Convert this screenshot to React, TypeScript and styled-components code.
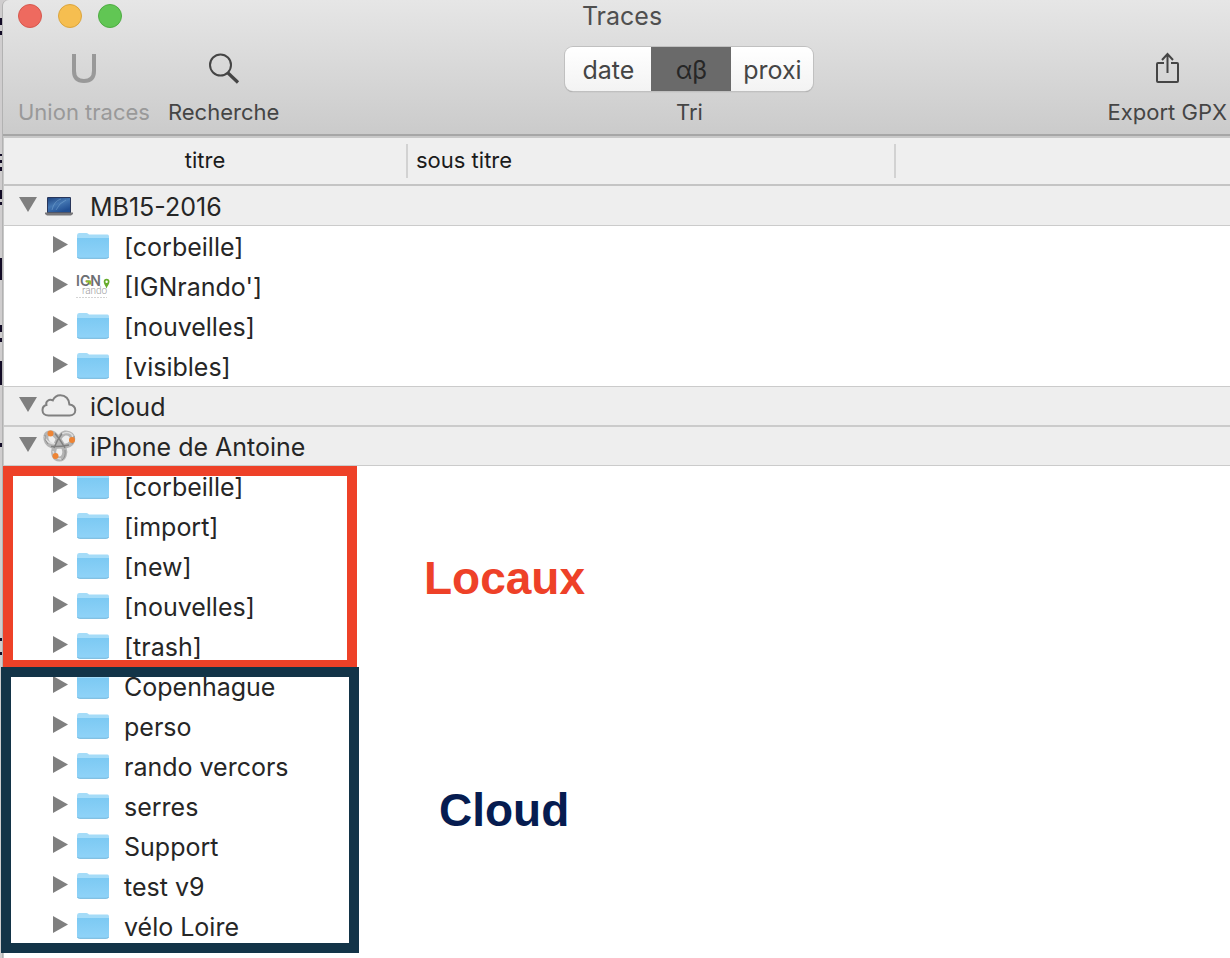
import React, { useState } from "react";
import styled, { createGlobalStyle, css } from "styled-components";

const GlobalStyle = createGlobalStyle`
  *, *::before, *::after { box-sizing: border-box; }
  html, body, #root { height: 100%; }
  body { margin: 0; background: #cfcdce; font-family: Inter, "Liberation Sans", sans-serif; color: #262626; }
  button { font: inherit; color: inherit; border: 0; padding: 0; background: none; }
`;

const Desktop = styled.div`
  display: flex;
  min-height: 100%;
  overflow: hidden;
`;

const Behind = styled.svg`
  flex: none;
  width: 2px;
  height: 958px;
`;

const Window = styled.main`
  flex: 1;
  min-width: 0;
  display: flex;
  flex-direction: column;
  background: #c8c8c8;
  border-left: 1px solid #b2b2b2;
  border-top-left-radius: 6px;
`;

const Toolbar = styled.header`
  display: flex;
  flex-direction: column;
  height: 138px;
  border-top-left-radius: 6px;
  background: linear-gradient(#e6e6e6, #cbcbcb 134px, #a6a6a6 134px, #a6a6a6 136px, #c8c8c8 136px);
`;

const TitleBar = styled.div`
  display: grid;
  grid-template-columns: 1fr auto 1fr;
  align-items: center;
  height: 32px;
  padding: 0 4px 0 15px;
`;

const Lights = styled.div`
  display: flex;
  gap: 16px;
`;

const Light = styled.button<{ $fill: string; $edge: string }>`
  width: 24px;
  height: 24px;
  border-radius: 50%;
  background: ${(p) => p.$fill};
  border: 1px solid ${(p) => p.$edge};
`;

const Title = styled.h1`
  margin: 0;
  font-size: 25px;
  line-height: 32px;
  font-weight: 400;
  color: #4f4f4f;
`;

const Tools = styled.div`
  display: flex;
  justify-content: space-between;
  height: 102px;
  padding: 0 3px 0 15px;
`;

const ToolGroup = styled.div`
  display: flex;
  gap: 18px;
`;

const toolColumn = css`
  display: flex;
  flex-direction: column;
  align-items: center;
  justify-content: flex-start;
  white-space: nowrap;
  font-size: 22px;
  line-height: 28px;
`;

const Tool = styled.button<{ $dim?: boolean }>`
  ${toolColumn}
  color: ${(p) => (p.$dim ? "#999999" : "#454545")};
`;

const ToolIcon = styled.svg`
  width: 40px;
  height: 40px;
  margin: 16px 0 10px;
  fill: none;
  stroke: currentColor;
`;

const SortField = styled.div`
  ${toolColumn}
  margin-right: 8px;
  color: #454545;
`;

const Segments = styled.div`
  display: flex;
  height: 44px;
  margin: 15px 0 7px;
  border-radius: 8px;
  overflow: hidden;
  background: linear-gradient(#ffffff, #f3f3f3);
  box-shadow: 0 0 0 1px #c0c0c0, 0 1px 1px #8c8c8c;
`;

const Segment = styled.button<{ $width: number }>`
  width: ${(p) => p.$width}px;
  font-size: 25px;
  line-height: 46px;
  color: #454545;
  &[aria-pressed="true"] {
    background: #6a6a6a;
    color: #262626;
  }
`;

const Content = styled.div`
  position: relative;
  flex: 1;
  margin-left: 1px;
  background: #ffffff;
`;

const Tree = styled.table`
  width: 100%;
  table-layout: fixed;
  border-collapse: separate;
  border-spacing: 0;
`;

const HeadCell = styled.th`
  height: 48px;
  padding: 6px 0;
  font-size: 22px;
  line-height: 34px;
  font-weight: 400;
  text-align: left;
  color: #1b1b1b;
  background: #efefef;
  border-bottom: 2px solid #c4c4c4;
`;

const HeadLabel = styled.span<{ $center?: boolean }>`
  display: block;
  height: 34px;
  padding-left: ${(p) => (p.$center ? 0 : 8)}px;
  line-height: 32px;
  text-align: ${(p) => (p.$center ? "center" : "left")};
  border-right: 2px solid #d2d2d2;
`;

const GroupCell = styled.td`
  height: 40px;
  padding: 0 0 0 14px;
  background: #eeeeee;
  border-bottom: 1px solid #cbcbcb;
  tbody + tbody & { border-top: 1px solid #cbcbcb; }
`;

const ItemCell = styled.td`
  height: 40px;
  padding: 0 0 0 46px;
`;

const Line = styled.div<{ $gap: number }>`
  display: flex;
  align-items: center;
  height: 38px;
  font-size: 25px;
  line-height: 38px;
  white-space: nowrap;
  svg { flex: none; }
  span { padding: 2px 0 0 ${(p) => p.$gap}px; }
`;

const Toggle = styled.button`
  flex: none;
  display: flex;
  width: 20px;
  height: 38px;
  align-items: center;
  justify-content: center;
  svg { fill: #7f7f7f; }
`;

const IconBox = styled.div<{ $width: number }>`
  flex: none;
  display: flex;
  justify-content: center;
  width: ${(p) => p.$width}px;
`;

const Frame = styled.div<{ $color: string; $top: number; $height: number; $left: number; $width: number }>`
  position: absolute;
  top: ${(p) => p.$top}px;
  left: ${(p) => p.$left}px;
  width: ${(p) => p.$width}px;
  height: ${(p) => p.$height}px;
  border: 10px solid ${(p) => p.$color};
  pointer-events: none;
`;

const Note = styled.strong<{ $color: string; $top: number; $left: number }>`
  position: absolute;
  top: ${(p) => p.$top}px;
  left: ${(p) => p.$left}px;
  font-family: "Liberation Sans", Arial, sans-serif;
  font-size: 46px;
  line-height: 52px;
  color: ${(p) => p.$color};
`;

function FolderIcon() {
  return (
    <svg width="34" height="28" viewBox="0 0 34 28" aria-hidden="true">
      <defs>
        <linearGradient id="folder" x1="0" y1="0" x2="0" y2="1">
          <stop offset="0" stopColor="#7cc9f3" />
          <stop offset="1" stopColor="#90d3f8" />
        </linearGradient>
      </defs>
      <path d="M1 3.500Q1 1 3 1H10.500Q12 1 13 2.500H31.500Q33 2.500 33 4.500V10H1Z" fill="#a5dcf8" />
      <path d="M1 6H33V24.500Q33 26.500 31 26.500H3Q1 26.500 1 24.500Z" fill="url(#folder)" />
      <path d="M1.500 25Q2 26.300 3.500 26.300H30.500Q32 26.300 32.500 25" fill="none" stroke="#74b7dd" />
    </svg>
  );
}

function IgnIcon() {
  return (
    <svg width="36" height="28" viewBox="0 0 36 28" aria-hidden="true">
      <text x="1" y="14" fontFamily="Inter, sans-serif" fontSize="14" fontWeight="600" fill="#6c6e72">IGN</text>
      <path d="M11 9.500H15V12.500" fill="none" stroke="#8fc02c" strokeWidth="2" />
      <text x="7" y="22" fontFamily="Roboto, sans-serif" fontSize="10" fontWeight="300" fill="#9a9a9a">rando</text>
      <path d="M31.500 16.500C30.500 13.500 28.700 12 28.700 9.700A2.900 2.900 0 0 1 34.500 9.700C34.500 12 32.500 13.500 31.500 16.500Z" fill="#66ac2c" />
      <circle cx="31.600" cy="9.700" r="1.200" fill="#ffffff" />
      <path d="M1 25.500H32" stroke="#d4d4d4" strokeWidth="1" strokeDasharray="2 1" />
    </svg>
  );
}

function LaptopIcon() {
  return (
    <svg width="30" height="22" viewBox="0 0 30 22" aria-hidden="true">
      <defs>
        <linearGradient id="screen" x1="0" y1="0" x2="0.600" y2="1">
          <stop offset="0" stopColor="#1f4480" />
          <stop offset="0.500" stopColor="#4477b3" />
          <stop offset="1" stopColor="#214f93" />
        </linearGradient>
      </defs>
      <rect x="3" y="2" width="24" height="17" rx="1" fill="#28365a" />
      <rect x="4" y="3" width="22" height="14" fill="url(#screen)" />
      <path d="M8 15Q10 6 17 4M12 15Q15 8 22 5" fill="none" stroke="#8db9dd" strokeWidth="0.800" opacity="0.500" />
      <path d="M1 17.500H29V19L27 20.500H3L1 19Z" fill="#777679" />
    </svg>
  );
}

function CloudIcon() {
  return (
    <svg width="36" height="24" viewBox="0 0 36 24" fill="none" stroke="#808080" strokeWidth="2" aria-hidden="true">
      <path d="M7.500 21.500C3.800 21.500 1.500 19.200 1.500 16.200C1.500 13.300 3.200 11.500 5.400 11C4.400 7.300 8 4.800 11.800 6.400C13.300 3 16 1.200 19.300 1.200C24.500 1.200 28.200 5 28.400 10.400C32 11 34.300 13.200 34.300 16.200C34.300 19.300 31.800 21.500 28.500 21.500Z" />
    </svg>
  );
}

function RingsIcon() {
  return (
    <svg width="34" height="34" viewBox="0 0 34 34" fill="none" aria-hidden="true">
      <g stroke="#b4b4b4" strokeWidth="5">
        <path d="M16 17C9 19 4 14 3.800 8.500C3.700 4 9 2.500 12 5C15.500 8 20 15 22 19C24 24 22 30 17.500 30C12 30 10.500 24 12.500 19" />
        <path d="M12.500 19C15 12 18 5 23 4C28 3.500 31.500 7 30.500 11.500C29 17 22 18 16 17" />
      </g>
      <path d="M2 7C4 12 8 15 14 15M20 5C25 2 30 4 31 8M11 22C12 28 15 30 19 30" stroke="#dedede" strokeWidth="1.500" />
      <path d="M12 19Q15 11 20 4.500M13 4.500Q18 10 23 19M9 17.500Q18 18 27 16" stroke="#808080" strokeWidth="1.500" />
      <path d="M6 15Q2 11 3 6M30 15Q33 11 32 7M23 21Q24 28 20 31" stroke="#8f8f8f" strokeWidth="1" />
      <g fill="#ee8434">
        <circle cx="8.500" cy="4.500" r="3" />
        <circle cx="30" cy="11" r="3" />
        <circle cx="13.500" cy="27" r="3" />
      </g>
    </svg>
  );
}

type Kind = "folder" | "ign";
type Group = { name: string; icon: React.ReactNode; items: { name: string; kind?: Kind }[] };

const groups: Group[] = [
  {
    name: "MB15-2016",
    icon: <LaptopIcon />,
    items: [{ name: "[corbeille]" }, { name: "[IGNrando']", kind: "ign" }, { name: "[nouvelles]" }, { name: "[visibles]" }],
  },
  { name: "iCloud", icon: <CloudIcon />, items: [] },
  {
    name: "iPhone de Antoine",
    icon: <RingsIcon />,
    items: [
      "[corbeille]", "[import]", "[new]", "[nouvelles]", "[trash]", "Copenhague",
      "perso", "rando vercors", "serres", "Support", "test v9", "vélo Loire",
    ].map((name) => ({ name })),
  },
];

const sorts = [
  { label: "date", width: 86 },
  { label: "αβ", width: 80 },
  { label: "proxi", width: 82 },
];

export default function App() {
  const [sort, setSort] = useState("αβ");
  return (
    <>
      <GlobalStyle />
      <Desktop>
        <Behind viewBox="0 0 2 958" aria-hidden="true">
          <path d="M0 18h2v7h-2zM0 31h2v4h-2zM0 154h2v2h-2zM0 160h2v3h-2zM0 167h2v4h-2zM0 190h2v9h-2zM0 202h2v3h-2zM0 258h2v22h-2zM0 325h2v7h-2zM0 338h2v4h-2zM0 361h2v24h-2zM0 443h2v4h-2zM0 638h2v3h-2zM0 652h2v3h-2z" fill="#120b26" />
        </Behind>
        <Window>
          <Toolbar>
            <TitleBar>
              <Lights>
                <Light aria-label="Fermer" $fill="#ee6a5f" $edge="#d6584e" />
                <Light aria-label="Réduire" $fill="#f6be50" $edge="#dba53d" />
                <Light aria-label="Agrandir" $fill="#61c654" $edge="#4eac42" />
              </Lights>
              <Title>Traces</Title>
            </TitleBar>
            <Tools>
              <ToolGroup>
                <Tool disabled $dim>
                  <ToolIcon viewBox="0 0 40 40" strokeWidth="4">
                    <path d="M10 6V23Q10 33 20 33Q30 33 30 23V6" />
                  </ToolIcon>
                  Union traces
                </Tool>
                <Tool>
                  <ToolIcon viewBox="0 0 40 40">
                    <circle cx="16.500" cy="17" r="10.500" strokeWidth="2" />
                    <path d="M24 25L34 34.500" strokeWidth="3.200" />
                  </ToolIcon>
                  Recherche
                </Tool>
              </ToolGroup>
              <SortField>
                <Segments role="group" aria-labelledby="tri">
                  {sorts.map((s) => (
                    <Segment key={s.label} $width={s.width} aria-pressed={sort === s.label} onClick={() => setSort(s.label)}>
                      {s.label}
                    </Segment>
                  ))}
                </Segments>
                <span id="tri">Tri</span>
              </SortField>
              <ToolGroup>
                <Tool>
                  <ToolIcon viewBox="0 0 40 40" strokeWidth="2">
                    <path d="M17 15H11Q10 15 10 16V33Q10 34 11 34H30Q31 34 31 33V16Q31 15 30 15H24M20.500 25V6M15 12L20.500 6L26 12" />
                  </ToolIcon>
                  Export GPX
                </Tool>
              </ToolGroup>
            </Tools>
          </Toolbar>
          <Content>
            <Tree>
              <colgroup>
                <col style={{ width: 404 }} />
                <col style={{ width: 488 }} />
                <col />
              </colgroup>
              <thead>
                <tr>
                  <HeadCell scope="col"><HeadLabel $center>titre</HeadLabel></HeadCell>
                  <HeadCell scope="col"><HeadLabel>sous titre</HeadLabel></HeadCell>
                  <HeadCell as="td" />
                </tr>
              </thead>
              {groups.map((g) => (
                <tbody key={g.name}>
                  <tr>
                    <GroupCell colSpan={3}>
                      <Line $gap={10}>
                        <Toggle aria-label={`Replier ${g.name}`}>
                          <svg width="18" height="20" viewBox="0 0 18 20"><path d="M0 1H18L9 16Z" /></svg>
                        </Toggle>
                        <IconBox $width={42}>{g.icon}</IconBox>
                        <span>{g.name}</span>
                      </Line>
                    </GroupCell>
                  </tr>
                  {g.items.map((i) => (
                    <tr key={i.name}>
                      <ItemCell colSpan={3}>
                        <Line $gap={8}>
                          <Toggle aria-label={`Déplier ${i.name}`}>
                            <svg width="16" height="20" viewBox="0 0 16 20"><path d="M1 0L16 8.500L1 17Z" /></svg>
                          </Toggle>
                          <IconBox $width={46}>{i.kind === "ign" ? <IgnIcon /> : <FolderIcon />}</IconBox>
                          <span>{i.name}</span>
                        </Line>
                      </ItemCell>
                    </tr>
                  ))}
                </tbody>
              ))}
            </Tree>
            <Frame $color="#ee4128" $top={328} $left={-1} $width={354} $height={204} />
            <Frame $color="#133448" $top={529} $left={-3} $width={358} $height={286} />
            <Note $color="#ee4128" $top={414} $left={420}>Locaux</Note>
            <Note $color="#061c50" $top={646} $left={435}>Cloud</Note>
          </Content>
        </Window>
      </Desktop>
    </>
  );
}
